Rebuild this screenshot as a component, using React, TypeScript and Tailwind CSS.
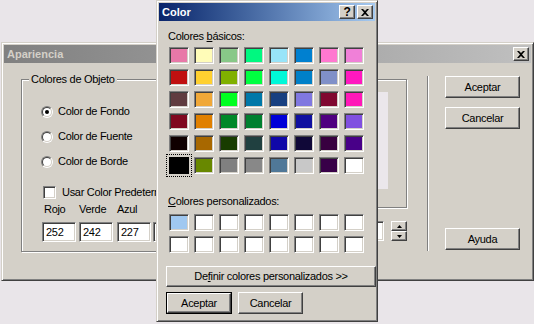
const face = "bg-[#d4d0c8]";
const raised =
  "border border-t-white border-l-white border-r-[#404040] border-b-[#404040] shadow-[inset_-1px_-1px_0_#808080]";
const sunken =
  "border border-t-[#808080] border-l-[#808080] border-r-white border-b-white shadow-[inset_1px_1px_0_#404040,inset_-1px_-1px_0_#d4d0c8]";
const windowFrame =
  "border border-t-[#d4d0c8] border-l-[#d4d0c8] border-r-[#404040] border-b-[#404040] shadow-[inset_1px_1px_0_#fff,inset_-1px_-1px_0_#808080]";

const basicColors = [
  ["#e878a8", "#fffcb8", "#88c888", "#00f880", "#98e4f8", "#0080d0", "#ff78d0", "#f080d8"],
  ["#c01010", "#ffd030", "#80b000", "#00ff40", "#00f8d8", "#0080c8", "#8090c8", "#ff18c0"],
  ["#603c40", "#f0a838", "#00ff20", "#0078a8", "#184080", "#8078e0", "#800830", "#ff18b8"],
  ["#800820", "#e08000", "#008828", "#008030", "#0000d8", "#1010a0", "#500080", "#8050e0"],
  ["#100000", "#a86800", "#183c00", "#204040", "#1008a8", "#100838", "#380040", "#480088"],
  ["#000000", "#688800", "#808080", "#888888", "#507898", "#c8c8c8", "#380048", "#ffffff"],
];

const customColors = ["#a0c8f0", ...Array(15).fill("#ffffff")];

const CloseGlyph = () => (
  <svg width="8" height="7" viewBox="0 0 8 7">
    <path d="M0 0h2l2 2 2-2h2L5 3.5 8 7H6L4 5 2 7H0l3-3.5z" fill="black" />
  </svg>
);

const CaptionButton = ({ children }: { children: React.ReactNode }) => (
  <div className={`w-[16px] h-[14px] ${face} ${raised} flex items-center justify-center`}>
    {children}
  </div>
);

const Button = ({
  label,
  className = "",
  isDefault = false,
}: {
  label: React.ReactNode;
  className?: string;
  isDefault?: boolean;
}) => {
  if (isDefault) {
    return (
      <div className={`border border-black ${className}`}>
        <div className={`h-full ${face} ${raised} flex items-center justify-center`}>{label}</div>
      </div>
    );
  }
  return (
    <div className={`${face} ${raised} flex items-center justify-center ${className}`}>{label}</div>
  );
};

const Swatch = ({ color, selected = false }: { color: string; selected?: boolean }) => {
  if (selected) {
    return (
      <div className="w-[20px] h-[17px] outline-1 outline-dotted outline-black outline-offset-[2px] border border-black shadow-[inset_-1px_-1px_0_#fff]">
        <div className="w-full h-full border border-black" style={{ backgroundColor: color }} />
      </div>
    );
  }
  return <div className={`w-[20px] h-[17px] ${sunken}`} style={{ backgroundColor: color }} />;
};

const Radio = ({ checked = false }: { checked?: boolean }) => (
  <div className="w-[12px] h-[12px] rounded-full border border-t-[#808080] border-l-[#808080] border-r-white border-b-white">
    <div className="w-full h-full rounded-full bg-white border border-t-[#404040] border-l-[#404040] border-r-[#d4d0c8] border-b-[#d4d0c8] flex items-center justify-center">
      {checked && <div className="w-[4px] h-[4px] rounded-full bg-black" />}
    </div>
  </div>
);

const Edit = ({ value, className = "" }: { value?: string; className?: string }) => (
  <div className={`h-[20px] bg-white ${sunken} pl-[3px] leading-[18px] ${className}`}>{value}</div>
);

const ColorDialog = () => (
  <div className={`absolute left-[156px] top-0 w-[222px] h-[322px] ${face} ${windowFrame} p-[2px]`}>
    {/* barra de título */}
    <div className="h-[18px] flex items-center justify-between pl-[3px] pr-[2px] bg-gradient-to-r from-[#0a246a] to-[#a6caf0]">
      <span className="text-white font-bold tracking-normal">Color</span>
      <div className="flex gap-[2px]">
        <CaptionButton>
          <span className="font-bold text-[12px] leading-none text-black">?</span>
        </CaptionButton>
        <CaptionButton>
          <CloseGlyph />
        </CaptionButton>
      </div>
    </div>

    <div className="flex flex-col pl-[7px]">
      <div className="ml-[2px] mt-[9px] h-[13px] leading-[13px]">
        Colores <u>b</u>ásicos:
      </div>
      <div className="ml-[3px] mt-[4px] grid grid-cols-[repeat(8,20px)] gap-x-[5px] gap-y-[5px]">
        {basicColors.flat().map((c, i) => (
          <Swatch key={i} color={c} selected={i === 40} />
        ))}
      </div>

      <div className="ml-[2px] mt-[21px] h-[13px] leading-[13px]">
        <u>C</u>olores personalizados:
      </div>
      <div className="ml-[3px] mt-[6px] grid grid-cols-[repeat(8,20px)] gap-x-[5px] gap-y-[5px]">
        {customColors.map((c, i) => (
          <Swatch key={i} color={c} />
        ))}
      </div>

      <Button
        className="mt-[13px] w-[210px] h-[21px]"
        label={
          <span>
            De<u>f</u>inir colores personalizados &gt;&gt;
          </span>
        }
      />
      <div className="flex mt-[5px] gap-[6px]">
        <Button isDefault className="w-[66px] h-[22px]" label="Aceptar" />
        <Button className="w-[65px] h-[22px]" label="Cancelar" />
      </div>
    </div>
  </div>
);

const AparienciaWindow = () => (
  <div className={`absolute left-[1px] top-[42px] w-[533px] h-[239px] ${face} ${windowFrame} p-[2px]`}>
    <div className="h-[18px] flex items-center justify-between pl-[3px] pr-[2px] bg-gradient-to-r from-[#808080] to-[#c0c0c0]">
      <span className="text-[#d4d0c8] font-bold tracking-normal">Apariencia</span>
      <CaptionButton>
        <CloseGlyph />
      </CaptionButton>
    </div>

    <div className="flex pt-[13px] pl-[17px]">
      {/* Colores de Objeto */}
      <div className="relative mt-[3px] w-[279px] h-[173px] border border-[#808080] shadow-[1px_1px_0_#fff,inset_1px_1px_0_#fff]">
        <span className={`absolute -top-[7px] left-[7px] px-[2px] ${face} leading-[13px]`}>
          Colores de Objeto
        </span>
        <div className="flex flex-col pl-[19px] pt-[25px] gap-[12px]">
          {["Color de Fondo", "Color de Fuente", "Color de Borde"].map((t, i) => (
            <div key={t} className="flex items-center h-[13px] gap-[5px]">
              <Radio checked={i === 0} />
              <span className="leading-[13px]">{t}</span>
            </div>
          ))}
        </div>
        <div className="flex items-center pl-[21px] mt-[18px] h-[13px] gap-[6px]">
          <div className={`w-[13px] h-[13px] bg-white ${sunken}`} />
          <span className="leading-[13px]">Usar Color Predeterm</span>
        </div>
        <div className="flex pl-[21px] mt-[4px] h-[13px] leading-[13px]">
          <span className="w-[36px] pl-[1px]">Rojo</span>
          <span className="w-[38px]">Verde</span>
          <span>Azul</span>
        </div>
        <div className="flex pl-[20px] mt-[6px]">
          <Edit value="252" className="w-[34px]" />
          <Edit value="242" className="w-[34px] ml-[3px]" />
          <Edit value="227" className="w-[34px] ml-[4px]" />
          <Edit className="w-[34px] ml-[2px]" />
        </div>
      </div>

      {/* vista previa */}
      <div className="ml-[10px] w-[97px] flex flex-col">
        <div className="mt-[3px] h-[129px] border border-[#808080] shadow-[1px_1px_0_#fff,inset_1px_1px_0_#fff] pt-[12px] pr-[18px] pb-[18px] pl-[18px]">
          <div className="w-full h-full bg-[#ebe7eb]" />
        </div>
        <div className="flex mt-[13px] pl-[20px]">
          <Edit className="w-[54px] h-[19px]" />
          <div className="ml-[7px] w-[16px] flex flex-col">
            <div className={`h-[10px] ${face} ${raised} flex items-center justify-center`}>
              <svg width="5" height="3" viewBox="0 0 5 3">
                <path d="M2.5 0L5 3H0z" fill="black" />
              </svg>
            </div>
            <div className={`h-[10px] ${face} ${raised} flex items-center justify-center`}>
              <svg width="5" height="3" viewBox="0 0 5 3">
                <path d="M0 0h5L2.5 3z" fill="black" />
              </svg>
            </div>
          </div>
        </div>
      </div>

      {/* separador */}
      <div className="ml-[20px] w-[2px] h-[175px] border-l border-l-[#808080] border-r border-r-white" />

      {/* botones */}
      <div className="ml-[16px] w-[75px] flex flex-col">
        <Button className="h-[22px]" label="Aceptar" />
        <Button className="h-[22px] mt-[9px]" label="Cancelar" />
        <Button className="h-[22px] mt-[99px]" label="Ayuda" />
      </div>
    </div>
  </div>
);

export default function App() {
  return (
    <div className="relative w-[534px] h-[324px] overflow-hidden bg-[#e9e5e9] text-black text-[11px] tracking-[-0.3px] font-['Liberation_Sans',Arial,sans-serif]">
      <AparienciaWindow />
      <ColorDialog />
    </div>
  );
}
